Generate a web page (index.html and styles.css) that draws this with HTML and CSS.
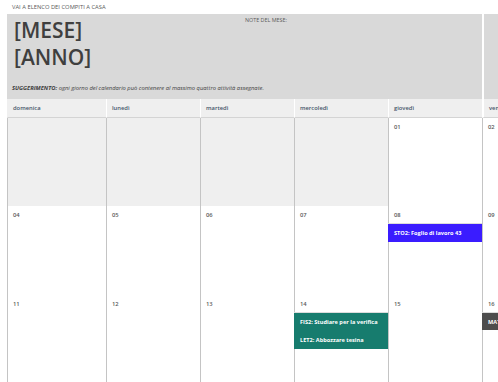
FILE: index.html
```html
<!DOCTYPE html>
<html lang="it">
<head>
<meta charset="utf-8">
<title>Calendario compiti</title>
<link rel="stylesheet" href="styles.css">
</head>
<body>
<div class="page">
  <div class="toplink">VAI A ELENCO DEI COMPITI A CASA</div>
  <div class="cal">
    <div class="band">
      <div class="title">
        <div class="big">[MESE]</div>
        <div class="big">[ANNO]</div>
      </div>
      <div class="notes">NOTE DEL MESE:</div>
      <div class="tip"><b>SUGGERIMENTO:</b> ogni giorno del calendario può contenere al massimo quattro attività assegnate.</div>
    </div>
    <div class="band band2"></div>

    <div class="dh first">domenica</div>
    <div class="dh">lunedì</div>
    <div class="dh">martedì</div>
    <div class="dh">mercoledì</div>
    <div class="dh">giovedì</div>
    <div class="dh last">venerdì</div>

    <div class="cell empty r1"></div>
    <div class="cell empty r1"></div>
    <div class="cell empty r1"></div>
    <div class="cell empty r1"></div>
    <div class="cell r1"><div class="num">01</div></div>
    <div class="cell r1"><div class="num">02</div></div>

    <div class="cell"><div class="num">04</div></div>
    <div class="cell"><div class="num">05</div></div>
    <div class="cell"><div class="num">06</div></div>
    <div class="cell"><div class="num">07</div></div>
    <div class="cell"><div class="num">08</div><div class="ev blue">STO2: Foglio di lavoro 43</div></div>
    <div class="cell"><div class="num">09</div></div>

    <div class="cell"><div class="num">11</div></div>
    <div class="cell"><div class="num">12</div></div>
    <div class="cell"><div class="num">13</div></div>
    <div class="cell"><div class="num">14</div><div class="ev green">FIS2: Studiare per la verifica</div><div class="ev green">LET2: Abbozzare tesina</div></div>
    <div class="cell"><div class="num">15</div></div>
    <div class="cell"><div class="num">16</div><div class="ev dark">MAT2: Esercizi</div></div>
  </div>
</div>
</body>
</html>
```

FILE: styles.css
```css
html, body {
  margin: 0;
  padding: 0;
  overflow: hidden;
  background: #fff;
}
body {
  font-family: "Open Sans", "Noto Sans", sans-serif;
  color: #595959;
}
.page {
  padding-left: 7px;
  width: 600px;
}
.toplink {
  height: 14px;
  line-height: 14px;
  font-size: 5.8px;
  padding-left: 5px;
  color: #595959;
}
.cal {
  display: grid;
  grid-template-columns: 99px 94px 94px 94px 94px 94px;
  grid-template-rows: 85px 19px 88px 89px 89px;
}
.band {
  grid-column: 1 / 6;
  background: #d9d9d9;
  display: grid;
  grid-template-columns: 238px 1fr;
  grid-template-rows: auto 1fr;
}
.band2 {
  grid-column: 6 / 7;
  margin-left: 2px;
}
.title {
  padding: 3px 0 0 7px;
}
.big {
  font-size: 21px;
  line-height: 27px;
  font-weight: 600;
  color: #3f3f3f;
}
.notes {
  font-size: 5.4px;
  line-height: 8px;
  padding-top: 2px;
  color: #595959;
}
.tip {
  grid-column: 1 / 3;
  font-size: 5.8px;
  line-height: 8px;
  font-style: italic;
  color: #404040;
  padding: 13px 0 0 5px;
}
.tip b {
  font-weight: 700;
}
.dh {
  background: #efefef;
  border-left: 1px solid #fff;
  border-bottom: 1px solid #d4d4d4;
  font-size: 5.8px;
  font-weight: 600;
  line-height: 18px;
  padding-left: 5px;
  color: #44546a;
}
.dh.first {
  border-left: 1px solid #efefef;
}
.dh.last {
  border-left: 2px solid #fff;
}
.cell {
  border-left: 1px solid #c4c4c4;
  background: #fff;
  display: flex;
  flex-direction: column;
}
.cell.empty {
  background: #efefef;
}
.num {
  font-size: 5.8px;
  font-weight: 600;
  line-height: 18px;
  height: 17px;
  padding-left: 5px;
  color: #595959;
}
.ev {
  margin-left: -1px;
  font-size: 5.6px;
  font-weight: 700;
  color: #fff;
  height: 18px;
  line-height: 18px;
  padding-left: 6px;
  white-space: nowrap;
  overflow: hidden;
}
.blue {
  background: #3a1cff;
  border-top: 1px solid #dcdcdc;
  height: 18px;
}
.green {
  background: #177c6e;
}
.cell .num + .green {
  border-top: 1px solid #dcdcdc;
}
.dark {
  background: #4d4d4d;
  border-top: 1px solid #dcdcdc;
  height: 17px;
}
```
